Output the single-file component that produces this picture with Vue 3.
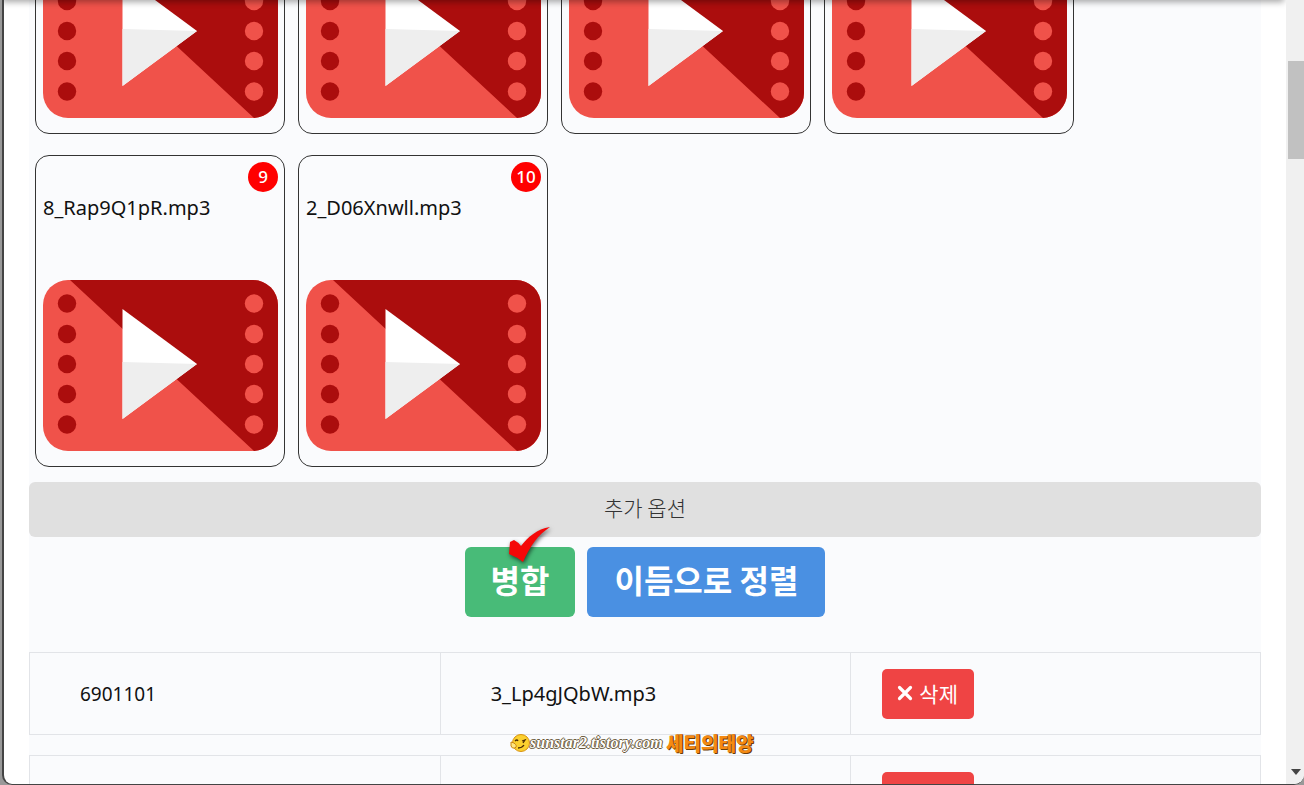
<!-- 파일 병합 페이지 -->
<template>
  <div class="window">
    <main class="page">
      <div class="top-shadow"></div>
      <div class="panel">
        <div class="file-grid">
          <div v-for="file in files" :key="file.id" class="file-card">
            <span v-if="file.name" class="badge">{{ file.id }}</span>
            <p v-if="file.name" class="file-name">{{ file.name }}</p>
            <svg class="file-icon" viewBox="0 0 235 171">
              <rect width="235" height="171" rx="25" fill="#f0524a" />
              <path d="M27 0H210A25 25 0 0 1 235 25V146A25 25 0 0 1 211 171Z" fill="#ab0d0d" />
              <g v-for="y in [23.5, 54, 84, 114, 144.5]" :key="y">
                <circle cx="24" :cy="y" r="9.2" fill="#ab0d0d" />
                <circle cx="211" :cy="y" r="9.2" fill="#f0524a" />
              </g>
              <path d="M79.5 29L154 84L79.5 139Z" fill="#fff" />
              <path d="M79.5 82L154 84L79.5 139Z" fill="#eee" />
            </svg>
          </div>
        </div>

        <button class="options" type="button">추가 옵션</button>

        <div class="actions">
          <button class="btn btn-merge" type="button" @click="merge">
            병합
            <svg class="check" viewBox="0 0 46 42">
              <path d="M2 16L6 14Q10 16 13 20C20 11 29 3 42 1C30 9 22 20 15 36Q9 31 1 28Z" fill="#f50808" />
            </svg>
          </button>
          <button class="btn btn-sort" type="button" @click="sortByName">이듬으로 정렬</button>
        </div>

        <table class="file-table">
          <tbody>
            <tr v-for="row in rows" :key="row.id">
              <td class="cell-size">{{ row.size }}</td>
              <td>{{ row.name }}</td>
              <td class="cell-action">
                <button class="btn-delete" type="button" aria-label="삭제" @click="removeRow(row)">
                  <svg v-if="row.name" viewBox="0 0 16 16">
                    <path
                      d="M2.5 2.5L13.5 13.5M13.5 2.5L2.5 13.5"
                      stroke="currentColor"
                      stroke-width="3.2"
                      stroke-linecap="round"
                    />
                  </svg>
                  <span v-if="row.name">삭제</span>
                </button>
              </td>
            </tr>
          </tbody>
        </table>
      </div>
    </main>

    <div class="scrollbar">
      <div class="thumb"></div>
      <svg class="arrow" viewBox="0 0 10 6"><path d="M0 0H10L5 6Z" fill="#444" /></svg>
    </div>

    <div class="watermark">
      <svg viewBox="0 0 20 20">
        <circle cx="11" cy="10" r="8.5" fill="#fbd02f" stroke="#d9920e" />
        <path d="M5 8Q7 6 8 8M12 8L15 7L13 10M8 15Q12 15 14 12" fill="none" stroke="#4a2a05" stroke-width="1.3" />
        <path d="M1 9L4 10Q8 13 5 15Q2 16 1 13Z" fill="#ffe680" stroke="#c98410" />
      </svg>
      <span class="site">sunstar2.tistory.com</span>
      <span class="owner">세티의태양</span>
    </div>
  </div>
</template>

<script setup>
import { ref } from 'vue'

const files = ref([
  { id: 5 },
  { id: 6 },
  { id: 7 },
  { id: 8 },
  { id: 9, name: '8_Rap9Q1pR.mp3' },
  { id: 10, name: '2_D06Xnwll.mp3' }
])

const rows = ref([
  { id: 1, size: '6901101', name: '3_Lp4gJQbW.mp3' },
  { id: 2, size: '', name: '' }
])

const merge = () => {
  rows.value = []
}

const sortByName = () => {
  files.value.sort((a, b) => (a.name || '').localeCompare(b.name || ''))
}

const removeRow = (row) => {
  rows.value = rows.value.filter((item) => item.id !== row.id)
}
</script>

<style>
body {
  background: #999;
}
</style>

<style scoped>
.window {
  position: relative;
  display: flex;
  box-sizing: border-box;
  height: 100vh;
  margin-left: 2px;
  overflow: hidden;
  background: #fff;
  border-left: 2px solid #444;
  border-bottom: 1px solid #444;
  border-radius: 0 0 10px 10px;
  font-family: "Noto Sans", "Noto Sans CJK KR", sans-serif;
  font-size: 20px;
  color: #111;
}

button {
  border: none;
  font-family: "Noto Sans CJK KR", sans-serif;
  cursor: pointer;
}

.page {
  position: relative;
  flex: 1;
  overflow: hidden;
  padding: 0 25px;
}

.top-shadow {
  position: absolute;
  top: -8px;
  left: 0;
  right: 4px;
  height: 8px;
  box-shadow: 0 0 6px 2px rgba(0, 0, 0, 0.35);
  z-index: 2;
}

/* 스크롤된 위치 */
.panel {
  margin-top: -178px;
  background: #fafbfd;
}

.file-grid {
  display: grid;
  grid-template-columns: repeat(auto-fill, 250px);
  grid-auto-rows: 1fr;
  gap: 21px 13px;
  padding: 0 6px 15px;
}

.file-card {
  position: relative;
  display: flex;
  flex-direction: column;
  justify-content: flex-end;
  box-sizing: border-box;
  padding: 38px 6px 15px 7px;
  border: 1px solid #333;
  border-radius: 14px;
}

.badge {
  position: absolute;
  top: 6px;
  right: 6px;
  width: 30px;
  height: 30px;
  border-radius: 50%;
  background: #f00;
  color: #fff;
  font-size: 17px;
  font-weight: 500;
  line-height: 30px;
  text-align: center;
}

.file-name {
  margin: 0 0 58px;
  line-height: 28px;
}

.file-icon {
  display: block;
  width: 100%;
}

.options {
  display: block;
  width: 100%;
  height: 55px;
  padding: 0 0 6px;
  border-radius: 6px;
  background: #e0e0e0;
  color: #333;
  font-size: 21px;
  font-weight: 300;
}

.actions {
  display: flex;
  justify-content: center;
  gap: 12px;
  padding: 10px 0 15px;
}

.btn {
  position: relative;
  height: 70px;
  padding: 0 26px 6px;
  border-radius: 6px;
  color: #fff;
  font-size: 32px;
  font-weight: 700;
}

.btn-merge {
  background: #48bb78;
}

.btn-sort {
  padding: 0 27px 6px;
  background: #4a90e2;
}

.check {
  position: absolute;
  top: -21px;
  left: 43px;
  width: 46px;
  height: 42px;
  filter: drop-shadow(1px 2px 2px rgba(0, 0, 0, 0.6));
}

.file-table {
  width: 100%;
  table-layout: fixed;
  border-collapse: separate;
  border-spacing: 0 20px;
}

.file-table td {
  box-sizing: border-box;
  height: 83px;
  padding: 0 0 0 50px;
  border: 1px solid #e2e4e8;
  border-right: none;
}

.file-table td.cell-size {
  font-size: 19px;
}

.file-table td.cell-action {
  padding: 0 0 0 31px;
  border-right: 1px solid #e2e4e8;
}

.btn-delete {
  display: flex;
  align-items: center;
  gap: 6px;
  box-sizing: border-box;
  min-width: 92px;
  height: 50px;
  padding: 0 15px 2px;
  border-radius: 5px;
  background: #ef4444;
  color: #fff;
  font-size: 21px;
}

.btn-delete svg {
  width: 16px;
  height: 16px;
}

.scrollbar {
  display: flex;
  flex-direction: column;
  justify-content: space-between;
  width: 16px;
  padding: 61px 0 9px 2px;
  background: #f0f0f0;
}

.thumb {
  height: 98px;
  background: #c1c1c1;
}

.arrow {
  width: 10px;
  margin-left: 3px;
}

.watermark {
  position: absolute;
  left: 506px;
  bottom: 30px;
  display: flex;
  align-items: center;
  line-height: 22px;
  white-space: nowrap;
}

.watermark svg {
  width: 20px;
  height: 20px;
}

.site {
  width: 136px;
  color: #fff;
  font-family: "Liberation Serif", serif;
  font-size: 16px;
  font-style: italic;
  font-weight: 700;
  text-shadow: 1px 0 #6b5a3a, -1px 0 #6b5a3a, 0 1px #6b5a3a, 0 -1px #6b5a3a;
}

.owner {
  color: #f58a12;
  font-family: "Noto Sans CJK KR", sans-serif;
  font-size: 19px;
  font-weight: 900;
  text-shadow: 1px 1px #6b3e08, 1px 0 #6b3e08;
}
</style>
